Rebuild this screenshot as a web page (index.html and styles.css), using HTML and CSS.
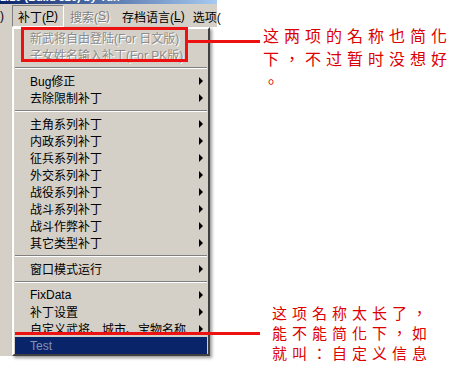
FILE: index.html
```html
<!DOCTYPE html>
<html>
<head lang="zh">
    <meta charset="UTF-8">
    <title>补丁菜单</title>
    <link rel="stylesheet" href="styles.css">
</head>
<body>
<div class="page">
    <div class="window">
        <div class="titlebar"><span>1.10 (Build 320) by Yun</span></div>
        <div class="menubar">
            <span class="mb-item cut">)</span>
            <span class="mb-item open">补丁(<u>P</u>)</span>
            <span class="mb-item disabled">搜索(<u>S</u>)</span>
            <span class="mb-item">存档语言(<u>L</u>)</span>
            <span class="mb-item">选项(</span>
        </div>
        <div class="client">
            <div class="gutter"></div>
            <div class="popup">
                <div class="item disabled">新武将自由登陆(For 日文版)</div>
                <div class="item disabled">子女姓名输入补丁(For PK版)</div>
                <div class="sep"></div>
                <div class="item sub">Bug修正</div>
                <div class="item sub">去除限制补丁</div>
                <div class="sep"></div>
                <div class="item sub">主角系列补丁</div>
                <div class="item sub">内政系列补丁</div>
                <div class="item sub">征兵系列补丁</div>
                <div class="item sub">外交系列补丁</div>
                <div class="item sub">战役系列补丁</div>
                <div class="item sub">战斗系列补丁</div>
                <div class="item sub">战斗作弊补丁</div>
                <div class="item sub">其它类型补丁</div>
                <div class="sep"></div>
                <div class="item sub">窗口模式运行</div>
                <div class="sep"></div>
                <div class="item sub">FixData</div>
                <div class="item sub">补丁设置</div>
                <div class="item sub">自定义武将、城市、宝物名称</div>
                <div class="item active">Test</div>
            </div>
        </div>
    </div>
    <div class="notes">
        <p class="note note-top">这两项的名称也简化<br>下，不过暂时没想好<br>。</p>
        <p class="note note-bottom">这项名称太长了，<br>能不能简化下，如<br>就叫：自定义信息</p>
    </div>

    <!-- 红色标注 -->
    <div class="mark box"></div>
    <div class="mark line-top"></div>
    <div class="mark line-bottom"></div>
</div>
</body>
</html>
```

FILE: styles.css
```css
body {
    margin: 0;
    background: #fff;
}

.page {
    position: relative;
    display: flex;
    width: 461px;
    height: 369px;
    overflow: hidden;
    font-family: "Liberation Sans", "Noto Sans CJK SC", sans-serif;
    font-size: 12px;
}

.window {
    width: 217px;
    flex: none;
}

.titlebar {
    height: 4px;
    overflow: hidden;
    background: linear-gradient(to right, #0a246a, #a6caf0);
}

.titlebar span {
    display: block;
    margin-top: -9px;
    line-height: 13px;
    font-size: 11px;
    font-weight: bold;
    color: #fff;
    white-space: nowrap;
}

.menubar {
    display: flex;
    height: 22px;
    padding-top: 1px;
    background: #d4d0c8;
    color: #000;
}

.mb-item {
    display: flex;
    align-items: center;
    padding: 0 4px;
    white-space: nowrap;
}

.mb-item.cut {
    padding: 0 8px 0 0;
}

.mb-item.open {
    padding: 0 5px;
    margin-right: 2px;
    border: 1px solid;
    border-color: #808080 #fff #fff #808080;
}

.mb-item.disabled {
    margin-right: 4px;
    color: #808080;
    text-shadow: 1px 1px 0 #fff;
}

.client {
    display: flex;
}

.gutter {
    width: 12px;
    background: #d4d0c8;
}

.popup {
    width: 192px;
    padding: 0 1px;
    background: #d4d0c8;
    border: 2px solid;
    border-color: #fff #404040 #404040 #fff;
    box-shadow: 2px 2px 3px rgba(0, 0, 0, 0.4);
}

.item {
    display: flex;
    justify-content: space-between;
    align-items: center;
    height: 17px;
    padding: 0 4px 0 15px;
    white-space: nowrap;
    color: #000;
}

.item.disabled {
    color: #8c8c8c;
    text-shadow: 1px 1px 0 #fff;
}

.item.sub::after {
    content: "";
    border-left: 4px solid #000;
    border-top: 4px solid transparent;
    border-bottom: 4px solid transparent;
}

.item.active {
    background: #0a246a;
    color: #8590b4;
}

.sep {
    display: flex;
    align-items: center;
    height: 9px;
}

.sep::before {
    content: "";
    flex: 1;
    border-top: 1px solid #808080;
    border-bottom: 1px solid #fff;
}

.notes {
    flex: 1;
    padding-left: 46px;
}

.note {
    margin: 0;
    font-family: "Noto Sans CJK TC", sans-serif;
    color: #dd0000;
    white-space: nowrap;
}

.note-top {
    margin-top: 24px;
    font-size: 16px;
    line-height: 23px;
    letter-spacing: 5px;
}

.note-bottom {
    margin-top: 210px;
    margin-left: 9px;
    font-size: 15px;
    line-height: 20px;
    letter-spacing: 5px;
}

.mark {
    position: absolute;
}

.box {
    left: 21px;
    top: 27px;
    width: 161px;
    height: 29px;
    border: 3px solid #ee1111;
}

.line-top {
    left: 188px;
    top: 40px;
    width: 72px;
    height: 3px;
    background: #ee1111;
}

.line-bottom {
    left: 15px;
    top: 332px;
    width: 245px;
    height: 3px;
    background: #ee1111;
}
```
